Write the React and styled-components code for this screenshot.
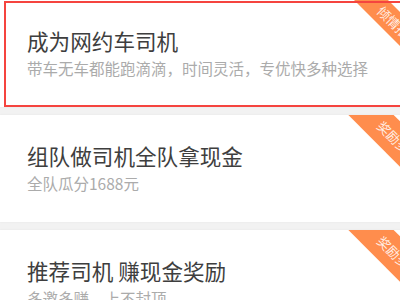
import React from "react";
import styled, { createGlobalStyle } from "styled-components";

const Global = createGlobalStyle`
  html, body {
    margin: 0;
    padding: 0;
    background: #f2f2f2;
    overflow: hidden;
  }
  body {
    font-family: "Noto Sans CJK SC", "Noto Sans", sans-serif;
  }
`;

const List = styled.div`
  display: flex;
  flex-direction: column;
  gap: 8px;
  width: 420px;
`;

const Card = styled.div`
  position: relative;
  height: 107px;
  box-sizing: border-box;
  padding: 28px 0 0 27px;
  background: #ffffff;
  box-shadow: 0 0 2px rgba(0, 0, 0, 0.06);
  overflow: hidden;

  ${(p) =>
    p.$active &&
    `
    &::after {
      content: "";
      position: absolute;
      top: 1px;
      left: 4px;
      right: 0;
      bottom: 0;
      border: 2px solid #f5443f;
      pointer-events: none;
    }
  `}
`;

const Title = styled.div`
  font-size: 21.6px;
  line-height: 26px;
  color: #3e3e3e;
  white-space: nowrap;
`;

const Subtitle = styled.div`
  margin-top: 4px;
  font-size: 15.5px;
  line-height: 20px;
  color: #ababab;
  white-space: nowrap;
`;

const Ribbon = styled.div`
  position: absolute;
  left: 328px;
  top: ${(p) => 27 - p.$band / 2}px;
  width: 140px;
  height: ${(p) => p.$band}px;
  line-height: ${(p) => p.$band}px;
  background: #ff8d4d;
  color: rgba(255, 255, 255, 0.88);
  font-size: 13px;
  text-align: center;
  transform: rotate(45deg);
  white-space: nowrap;
`;

const items = [
  {
    title: "成为网约车司机",
    sub: "带车无车都能跑滴滴，时间灵活，专优快多种选择",
    tag: "倾情推荐",
    active: true,
    band: 24,
  },
  {
    title: "组队做司机全队拿现金",
    sub: "全队瓜分1688元",
    tag: "奖励多多",
    band: 32,
  },
  {
    title: "推荐司机 赚现金奖励",
    sub: "多邀多赚，上不封顶",
    tag: "奖励多多",
    band: 32,
  },
];

export default function App() {
  return (
    <>
      <Global />
      <List>
        {items.map((it) => (
          <Card key={it.title} $active={it.active}>
            <Title>{it.title}</Title>
            <Subtitle>{it.sub}</Subtitle>
            <Ribbon $band={it.band}>{it.tag}</Ribbon>
          </Card>
        ))}
      </List>
    </>
  );
}
